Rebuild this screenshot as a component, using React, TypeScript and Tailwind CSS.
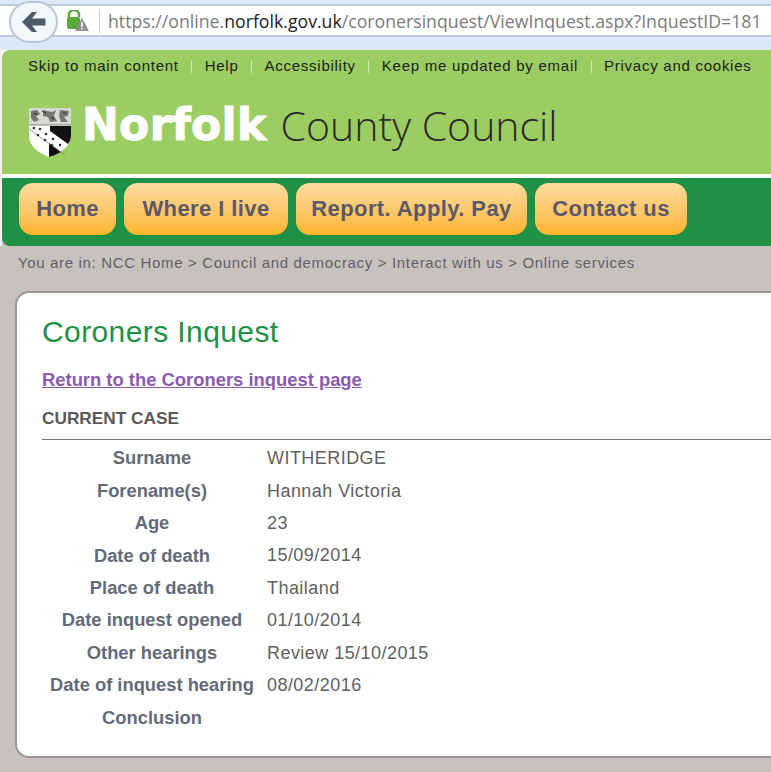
const topLinks = ["Skip to main content", "Help", "Accessibility", "Keep me updated by email", "Privacy and cookies"];

const navItems = [
  { label: "Home", width: "w-[97px]" },
  { label: "Where I live", width: "w-[164px]" },
  { label: "Report. Apply. Pay", width: "w-[231px]" },
  { label: "Contact us", width: "w-[152px]" },
];

const rows = [
  ["Surname", "WITHERIDGE"],
  ["Forename(s)", "Hannah Victoria"],
  ["Age", "23"],
  ["Date of death", "15/09/2014"],
  ["Place of death", "Thailand"],
  ["Date inquest opened", "01/10/2014"],
  ["Other hearings", "Review 15/10/2015"],
  ["Date of inquest hearing", "08/02/2016"],
  ["Conclusion", ""],
];

function Crest() {
  return (
    <svg width="44" height="51" viewBox="0 0 44 51" className="shrink-0">
      <path d="M1 1H43V28C43 40 32 46 21 50C11 46 1 40 1 28Z" fill="#fff" />
      <path d="M1 1H43V18H1Z" fill="#d8d8d4" />
      <path d="M3 4L9 3L12 7L8 9L11 13L6 15L3 11ZM15 3L24 5L28 3L26 9L29 14L22 15L20 10L15 9ZM32 3L41 4L40 9L36 10L40 15L33 15L31 9Z" fill="#77776f" />
      <path d="M14 4L18 6M23 10L26 12M6 6L9 8M35 5L38 7" stroke="#222" strokeWidth="1" />
      <path d="M1 18H43" stroke="#555" strokeWidth="0.7" />
      <path d="M22 19H43V28C43 32 42 34 40 37L22 24Z" fill="#111" />
      <path d="M21 36L33 45C29 47 25 49 21 50Z" fill="#111" />
      <path d="M1 22L37 48" stroke="#777" strokeWidth="0.7" />
      <g fill="#333">
        <circle cx="6" cy="21" r="1.3" />
        <circle cx="12" cy="22" r="1.3" />
        <circle cx="10" cy="28" r="1.3" />
        <circle cx="18" cy="27" r="1.3" />
        <circle cx="17" cy="33" r="1.3" />
        <circle cx="25" cy="32" r="1.3" />
        <circle cx="24" cy="38" r="1.3" />
        <circle cx="32" cy="38" r="1.3" />
      </g>
    </svg>
  );
}

function BrowserBar() {
  return (
    <div className="h-[50px] bg-[#dce9f8] flex items-center relative overflow-hidden">
      <div className="absolute left-[9px] top-[1px] w-[49px] h-[42px] rounded-full border-2 border-[#b7c6d6] bg-[#f3f7fb] flex items-center justify-center z-10">
        <svg width="24" height="22" viewBox="0 0 24 22">
          <path d="M0 11L10 1H15L10 7.5H23.5V14.5H10L15 21H10Z" fill="#4d5b6b" />
        </svg>
      </div>
      <div className="w-full h-[33px] mb-[9px] bg-white border-y-2 border-[#bccbdc] flex items-center pl-[66px] pr-2">
        <svg width="24" height="22" viewBox="0 0 24 22" className="shrink-0">
          <path d="M3 7V5a5 5 0 0 1 10 0v2" fill="none" stroke="#58a83a" strokeWidth="2.5" />
          <rect x="1" y="7" width="13" height="12" rx="2" fill="#58a83a" />
          <path d="M16 8L23 21H9Z" fill="#8f8f8f" />
          <rect x="15.2" y="12" width="1.6" height="5" fill="#fff" />
          <rect x="15.2" y="18" width="1.6" height="1.6" fill="#fff" />
        </svg>
        <div className="w-px h-6 bg-[#cfcfcf] ml-[9px] mr-[8px]" />
        <div className="font-['Open_Sans',sans-serif] text-[17.7px] pt-[1px] text-[#7b7b7b] whitespace-nowrap">
          https://online.<span className="text-[#222]">norfolk.gov.uk</span>/coronersinquest/ViewInquest.aspx?InquestID=181
        </div>
      </div>
    </div>
  );
}

function Header() {
  return (
    <div className="border-l-2 border-[#f4f2f0]">
      <div className="bg-white">
        <div className="h-[124px] bg-[#9ccd62] rounded-tl-[8px] pl-[26px] flex flex-col">
          <div className="flex items-center h-[32px] text-[15px] text-[#1c1c1c] tracking-[0.74px]">
            {topLinks.map((link, i) => (
              <div key={link} className="flex items-center">
                {i > 0 && <span className="w-px h-[13px] bg-[#d5e9b8] mx-[12.5px]" />}
                <span className="whitespace-nowrap">{link}</span>
              </div>
            ))}
          </div>
          <div className="flex items-start mt-[25px]">
            <Crest />
            <span className="ml-[10px] mt-[-4px] text-[44px] leading-none font-bold text-white tracking-[0.3px] [-webkit-text-stroke:1px_white] font-['DejaVu_Sans',sans-serif]">Norfolk</span>
            <span className="ml-[14px] mt-[-2px] text-[41px] leading-none font-light text-[#2a2a2a] font-['Open_Sans',sans-serif]">County Council</span>
          </div>
        </div>
        <div className="h-[4px]" />
      </div>
      <nav className="h-[68px] bg-[#1e9145] rounded-bl-[8px] flex items-center gap-2 pl-[17px] pb-[6px]">
        {navItems.map((item) => (
          <div
            key={item.label}
            className={`${item.width} h-[52px] pb-[2px] rounded-[14px] bg-gradient-to-b from-[#fddc9e] to-[#fdb525] flex items-center justify-center font-bold text-[22px] tracking-[0.4px] text-[#5d5868]`}
          >
            {item.label}
          </div>
        ))}
      </nav>
    </div>
  );
}

export default function App() {
  return (
    <div className="w-[771px] h-[772px] overflow-hidden bg-[#c9c1be] font-['Liberation_Sans',Arial,sans-serif]">
      <BrowserBar />
      <Header />
      <div className="pl-[18px] h-[45px] pt-[6px] text-[15px] tracking-[0.66px] text-[#5f5f6b] whitespace-nowrap">
        You are in: NCC Home &gt; Council and democracy &gt; Interact with us &gt; Online services
      </div>
      <main className="ml-[15px] mr-[-1px] h-[467px] bg-white border-l-2 border-y-2 border-[#9b9795] rounded-l-[14px] pl-[25px] pt-[21px]">
        <h1 className="text-[30px] leading-[36px] text-[#1e9145] tracking-[0.4px]">Coroners Inquest</h1>
        <a className="block mt-[19px] text-[18.4px] leading-[22px] font-bold text-[#8a5bb0] underline">Return to the Coroners inquest page</a>
        <h2 className="mt-[16px] text-[17.25px] leading-[22px] font-bold text-[#595959]">CURRENT CASE</h2>
        <div className="mt-[10px] border-t border-[#777] pt-[2px]">
          {rows.map(([label, value]) => (
            <div key={label} className="flex items-center h-[32.4px] text-[18px]">
              <div className="w-[220px] text-center text-[18.35px] font-bold text-[#636b78] whitespace-nowrap">{label}</div>
              <div className="ml-[5px] pt-[1px] text-[#5f5f5f] tracking-[0.45px]">{value}</div>
            </div>
          ))}
        </div>
      </main>
    </div>
  );
}
